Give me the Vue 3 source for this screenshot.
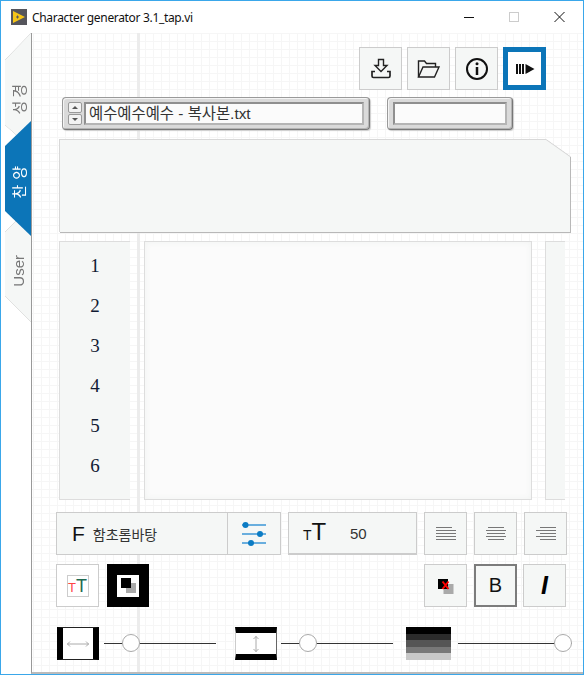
<script setup>
const numbers = [1, 2, 3, 4, 5, 6]
const alignments = [
  [[0, 16], [0, 20], [0, 20], [0, 20], [0, 20]],
  [[2, 16], [0, 20], [1, 18], [0, 20], [2, 16]],
  [[4, 16], [0, 20], [4, 16], [0, 20], [4, 16]],
]
</script>

<template>
  <div class="window">
    <header class="titlebar">
      <svg class="app-icon" width="16" height="16" viewBox="0 0 16 16">
        <rect width="16" height="16" fill="#55555c" />
        <path d="M2 2 L14 8 L2 14 Z" fill="#f5c518" />
        <path d="M5 8h3M6.500 6.500v3" stroke="#55555c" stroke-width="1" />
      </svg>
      <span class="title">Character generator 3.1_tap.vi</span>
      <div class="win-buttons">
        <svg width="14" height="14" viewBox="0 0 14 14"><path d="M1 7.500h10" stroke="#111" /></svg>
        <svg width="14" height="14" viewBox="0 0 14 14"><rect x="1.500" y="2.500" width="9" height="9" fill="none" stroke="#ccc" /></svg>
        <svg width="14" height="14" viewBox="0 0 14 14"><path d="M1.500 2l10 10M11.500 2l-10 10" stroke="#111" fill="none" /></svg>
      </div>
    </header>

    <div class="body">
      <nav class="tabs">
        <div class="tab tab-one"><div class="shape"><span>성경</span></div></div>
        <div class="tab tab-active"><div class="shape"><span>찬양</span></div></div>
        <div class="tab tab-user"><div class="shape"><span>User</span></div></div>
      </nav>

      <main class="panel">
        <div class="toolbar">
          <button class="btn">
            <svg width="26" height="26" viewBox="0 0 26 26" fill="none" stroke="#222" stroke-width="1.400">
              <path d="M10.500 3.500h5v6h3.500L13 15.500l-6-6h3.500z" />
              <path d="M7 15.500H4v4.500q0 1.500 1.500 1.500h15q1.500 0 1.500-1.500v-4.500h-3" stroke-width="1.700" />
            </svg>
          </button>
          <button class="btn">
            <svg width="26" height="26" viewBox="0 0 26 26" fill="none" stroke="#222" stroke-width="1.400">
              <path d="M2.500 21V5h6l2 2.500h9V11" />
              <path d="M2.500 21h16l4.500-10H7z" />
            </svg>
          </button>
          <button class="btn">
            <svg width="26" height="26" viewBox="0 0 26 26" fill="none" stroke="#111">
              <circle cx="13" cy="13" r="10" stroke-width="2" />
              <path d="M13 11v8" stroke-width="2.500" />
              <circle cx="13" cy="7.800" r="1.500" fill="#111" stroke="none" />
            </svg>
          </button>
          <button class="btn btn-run">
            <svg width="20" height="10" viewBox="0 0 20 10" fill="#111">
              <rect x="1" y="0" width="2" height="10" />
              <rect x="4" y="0" width="2" height="10" />
              <rect x="7" y="0" width="2" height="10" />
              <path d="M10.500 0l9 5-9 5z" />
            </svg>
          </button>
        </div>

        <div class="file-row">
          <div class="raised path-box">
            <div class="stepper">
              <span class="step"><i class="up"></i></span>
              <span class="step"><i class="down"></i></span>
            </div>
            <div class="inset path-text">예수예수예수 - 복사본.txt</div>
          </div>
          <div class="raised extra-box">
            <div class="inset"></div>
          </div>
        </div>

        <div class="notes-wrap"><div class="notes"></div></div>

        <div class="lists">
          <div class="numbers">
            <span v-for="n in numbers" :key="n">{{ n }}</span>
          </div>
          <div class="text-area"></div>
          <div class="scroll"></div>
        </div>

        <div class="row font-row">
          <div class="box font-box">
            <div class="font-name"><b>F</b><span>함초롬바탕</span></div>
            <div class="font-settings">
              <svg width="24" height="24" viewBox="0 0 24 24" stroke="#3b97d6" fill="#0c7cc4" stroke-width="1.300">
                <path d="M0 3h24M0 12h24M0 21h24" />
                <circle cx="3.500" cy="3" r="3" stroke="none" />
                <circle cx="18" cy="12" r="3" stroke="none" />
                <circle cx="9" cy="21" r="3" stroke="none" />
              </svg>
            </div>
          </div>
          <div class="box size-box">
            <span class="tt"><small>T</small>T</span>
            <span class="size-num">50</span>
          </div>
          <div class="aligns">
            <button v-for="(lines, i) in alignments" :key="i" class="btn">
              <svg width="20" height="14" viewBox="0 0 20 14" stroke="#777">
                <path v-for="(l, j) in lines" :key="j" :d="`M${l[0]} ${j * 3 + 0.5}h${l[1]}`" />
              </svg>
            </button>
          </div>
        </div>

        <div class="row style-row">
          <div class="left-styles">
            <button class="btn btn-white">
              <span class="color-tt"><em>T</em><strong>T</strong></span>
            </button>
            <div class="bw-frame">
              <div class="bw-inner">
                <i class="sq-grey"></i>
                <i class="sq-black"></i>
              </div>
            </div>
          </div>
          <div class="aligns">
            <button class="btn">
              <svg width="20" height="20" viewBox="0 0 20 20">
                <rect x="7.500" y="8" width="10" height="10" fill="#aaa" />
                <rect x="2" y="3" width="10" height="10" fill="#000" />
                <path d="M6.500 5.500l6 7.500M12.500 5.500l-6 7.500" stroke="#f00" stroke-width="2" />
              </svg>
            </button>
            <button class="btn btn-bold">B</button>
            <button class="btn btn-italic">I</button>
          </div>
        </div>

        <div class="row slider-row">
          <div class="swatch swatch-h">
            <svg width="22" height="6" viewBox="0 0 22 6" fill="none" stroke="#aaa">
              <path d="M0 3h22M3 .500L.500 3 3 5.500M19 .500L21.500 3 19 5.500" />
            </svg>
          </div>
          <div class="slider s1"><i style="left: 18px"></i></div>
          <div class="swatch swatch-v">
            <svg width="6" height="16" viewBox="0 0 6 16" fill="none" stroke="#aaa">
              <path d="M3 0v16M.500 3L3 .500 5.500 3M.500 13L3 15.500 5.500 13" />
            </svg>
          </div>
          <div class="slider s2"><i style="left: 18px"></i></div>
          <div class="swatch-grey">
            <span v-for="c in ['#000', '#2b2b2b', '#555', '#787878', '#c8c8c8']" :key="c" :style="{ background: c }"></span>
          </div>
          <div class="slider s3"><i style="left: 96px"></i></div>
        </div>
      </main>
    </div>
  </div>
</template>

<style scoped>
.window {
  width: 584px;
  height: 675px;
  box-sizing: border-box;
  border: 1px solid #3aa7ea;
  background: #fff;
  font-family: "Liberation Sans", "Noto Sans CJK KR", sans-serif;
  display: flex;
  flex-direction: column;
  overflow: hidden;
}
.titlebar {
  height: 32px;
  flex: none;
  display: flex;
  align-items: center;
  padding: 0 0 0 10px;
}
.app-icon {
  margin-right: 5px;
}
.title {
  font-family: "Noto Sans", "Liberation Sans", sans-serif;
  font-size: 12px;
  letter-spacing: -0.33px;
  color: #111;
}
.win-buttons {
  margin-left: auto;
  display: flex;
  gap: 31px;
  padding-right: 16px;
}
.body {
  flex: 1;
  display: flex;
  min-height: 0;
}
.tabs {
  width: 30px;
  flex: none;
  position: relative;
}
.tab {
  position: absolute;
  left: 4px;
  width: 26px;
  filter: drop-shadow(0 0 0.6px #999);
}
.shape {
  height: 100%;
  box-sizing: border-box;
  display: flex;
  align-items: center;
  justify-content: center;
}
.shape span {
  writing-mode: vertical-rl;
  text-orientation: sideways;
  transform: rotate(180deg);
  font-size: 15px;
}
.tab-one {
  top: 0;
  height: 115px;
}
.tab-one .shape {
  background: #f5f7f6;
  color: #777;
  padding-top: 15px;
  clip-path: polygon(100% 0, 100% 100%, 0 92px, 0 27px);
}
.tab-one span {
  letter-spacing: 3px;
}
.tab-active {
  top: 88px;
  height: 115px;
  z-index: 1;
  filter: none;
}
.tab-active .shape {
  background: #0c75b8;
  color: #fff;
  padding-top: 2px;
  clip-path: polygon(100% 0, 100% 100%, 0 90px, 0 25px);
}
.tab-active span {
  letter-spacing: 5px;
}
.tab-user {
  top: 173px;
  height: 116px;
}
.tab-user .shape {
  background: #f5f7f6;
  color: #777;
  padding-top: 14px;
  clip-path: polygon(100% 0, 100% 100%, 0 90px, 0 26px);
}
.panel {
  flex: 1;
  min-width: 0;
  box-sizing: border-box;
  border-left: 1px solid #999;
  border-bottom: 2px solid #bbb;
  background-color: #fff;
  background-image:
    linear-gradient(#ececec, #ececec),
    linear-gradient(#f6f6f6 1px, transparent 1px),
    linear-gradient(90deg, #f6f6f6 1px, transparent 1px);
  background-size: 3px 100%, 8px 8px, 8px 8px;
  background-position: 105px 0, 0 0, 1px 0;
  background-repeat: no-repeat, repeat, repeat;
  padding-top: 14px;
}
.toolbar {
  display: flex;
  gap: 5px;
  padding-left: 327px;
}
.btn {
  width: 43px;
  height: 43px;
  flex: none;
  box-sizing: border-box;
  border: 1px solid #ccc;
  background: #f5f7f6;
  padding: 0;
  display: flex;
  align-items: center;
  justify-content: center;
}
.btn-run {
  border: 5px solid #0c75b8;
  background: #fff;
}
.btn-white {
  background: #fff;
}
.file-row {
  display: flex;
  margin: 7px 0 0 30px;
  gap: 17px;
}
.raised {
  height: 33px;
  box-sizing: border-box;
  border-radius: 4px;
  background: #dadada;
  border: 1px solid #9a9a9a;
  border-right-color: #777;
  border-bottom-color: #777;
  box-shadow: inset 1px 1px 0 #f4f4f4, inset -1px -1px 0 #b4b4b4, 1px 1px 1px #ccc;
  padding: 4px 5px;
  display: flex;
  gap: 2px;
}
.path-box {
  width: 308px;
}
.extra-box {
  width: 126px;
}
.inset {
  flex: 1;
  min-width: 0;
  box-sizing: border-box;
  height: 23px;
  background: #fbfbfb;
  border: 2px solid #8f8f8f;
  border-right-color: #b5b5b5;
  border-bottom-color: #b5b5b5;
}
.path-text {
  font-size: 15.400px;
  line-height: 19px;
  padding-left: 3px;
  color: #333;
  white-space: nowrap;
  overflow: hidden;
}
.stepper {
  width: 14px;
  display: flex;
  flex-direction: column;
  gap: 1px;
}
.step {
  flex: 1;
  background: #f2f2f2;
  border: 1px solid #999;
  border-radius: 2px;
  display: flex;
  align-items: center;
  justify-content: center;
}
.step i {
  width: 0;
  height: 0;
  border-left: 3px solid transparent;
  border-right: 3px solid transparent;
}
.up {
  border-bottom: 3px solid #555;
}
.down {
  border-top: 3px solid #555;
}
.notes-wrap {
  margin: 10px 0 0 28px;
  width: 510px;
  filter: drop-shadow(0 -1px 0 #d8d8d8) drop-shadow(-1px 0 0 #d8d8d8) drop-shadow(1px 1px 0 #b8b8b8);
}
.notes {
  height: 92px;
  background: #f5f7f6;
  clip-path: polygon(0 0, 486px 0, 100% 17px, 100% 100%, 0 100%);
}
.lists {
  display: flex;
  height: 259px;
  margin: 9px 0 0 27px;
}
.numbers {
  width: 71px;
  box-sizing: border-box;
  background: #f5f7f6;
  border: 1px solid #ddd;
  border-right: none;
  padding-top: 4px;
  display: flex;
  flex-direction: column;
  align-items: center;
}
.numbers span {
  height: 40px;
  line-height: 40px;
  font-family: "Liberation Serif", "Noto Sans CJK KR", serif;
  font-size: 19px;
  color: #111a33;
}
.text-area {
  width: 388px;
  margin-left: 14px;
  box-sizing: border-box;
  background: #fbfbfb;
  border: 1px solid #ddd;
  box-shadow: inset 0 0 6px #f0f2f1;
}
.scroll {
  width: 20px;
  margin-left: 13px;
  box-sizing: border-box;
  background: #f5f7f6;
  border: 1px solid #ddd;
  border-right: none;
}
.row {
  display: flex;
  margin-left: 24px;
}
.font-row {
  margin-top: 12px;
  gap: 7px;
}
.box {
  height: 43px;
  box-sizing: border-box;
  background: #f5f7f6;
  border: 1px solid #ccc;
  display: flex;
  align-items: center;
}
.font-box {
  width: 225px;
}
.font-name {
  flex: 1;
  display: flex;
  align-items: center;
  padding-left: 15px;
  gap: 8px;
}
.font-name b {
  font-weight: 400;
  font-size: 21px;
  color: #111;
}
.font-name span {
  font-family: "Noto Sans CJK KR", sans-serif;
  font-size: 14px;
  color: #333;
}
.font-settings {
  width: 53px;
  height: 100%;
  box-sizing: border-box;
  border-left: 1px solid #ccc;
  display: flex;
  align-items: center;
  justify-content: center;
}
.size-box {
  width: 129px;
  border-bottom-width: 2px;
  padding-left: 14px;
}
.tt {
  font-size: 24px;
  line-height: 24px;
  color: #111;
  width: 47px;
}
.tt small {
  font-size: 14px;
}
.size-num {
  font-size: 15px;
  color: #333;
}
.aligns {
  display: flex;
  gap: 7px;
}
.style-row {
  margin-top: 9px;
  justify-content: space-between;
  width: 510px;
}
.left-styles {
  display: flex;
  gap: 8px;
}
.color-tt {
  width: 22px;
  height: 22px;
  box-sizing: border-box;
  border: 1px solid #ccc;
  display: flex;
  align-items: baseline;
  justify-content: center;
  line-height: 20px;
  font-size: 18px;
}
.color-tt em {
  font-style: normal;
  font-size: 13px;
  color: #f44;
}
.color-tt strong {
  font-weight: 400;
  color: #1f6a50;
}
.bw-frame {
  width: 42px;
  height: 43px;
  background: #000;
  display: flex;
  align-items: center;
  justify-content: center;
}
.bw-inner {
  width: 22px;
  height: 22px;
  background: #fff;
  position: relative;
}
.sq-black,
.sq-grey {
  position: absolute;
  width: 10px;
  height: 10px;
}
.sq-black {
  left: 4px;
  top: 3px;
  background: #000;
}
.sq-grey {
  left: 9px;
  top: 8px;
  background: #aaa;
}
.btn-bold {
  border: 2px solid #7c7c7c;
  font-size: 20px;
  color: #111;
  font-family: "Liberation Sans", sans-serif;
}
.btn-italic {
  margin-left: -1px;
  font-size: 25px;
  font-weight: 700;
  font-style: italic;
  color: #000;
  font-family: "Liberation Sans", sans-serif;
}
.slider-row {
  margin-top: 20px;
  margin-left: 25px;
  height: 33px;
  align-items: center;
}
.swatch {
  width: 42px;
  height: 33px;
  box-sizing: border-box;
  background: #fff;
  border: 1px solid #222;
  display: flex;
  align-items: center;
  justify-content: center;
}
.swatch-h {
  border-left: 6px solid #000;
  border-right: 6px solid #000;
}
.swatch-v {
  border-top: 6px solid #000;
  border-bottom: 6px solid #000;
  border-right-color: #666;
  border-left-color: #ccc;
}
.slider {
  width: 112px;
  height: 1px;
  background: #333;
  position: relative;
}
.slider i {
  position: absolute;
  top: -9px;
  width: 18px;
  height: 18px;
  box-sizing: border-box;
  border: 1px solid #aaa;
  border-radius: 50%;
  background: #fff;
}
.s1 {
  margin: 0 19px 0 5px;
}
.s2 {
  margin: 0 13px 0 4px;
}
.s3 {
  margin-left: 7px;
  width: 114px;
}
.swatch-grey {
  width: 45px;
  height: 33px;
  display: flex;
  flex-direction: column;
}
.swatch-grey span {
  flex: 1;
}
</style>

<style>
html,
body {
  margin: 0;
  background: #fff;
}
</style>
